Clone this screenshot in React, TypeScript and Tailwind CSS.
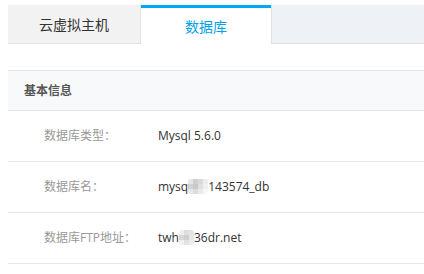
const rows = [
  { label: "数据库类型：", value: <>Mysql 5.6.0</> },
  {
    label: "数据库名：",
    value: (
      <>
        mysq
        <Mosaic cells={["#e6e6e6", "#cfcfcf", "#dadada", "#ececec", "#d2d2d2", "#c8c8c8", "#e0e0e0", "#f0f0f0", "#e8e8e8", "#dcdcdc", "#eaeaea", "#f6f6f6"]} />
        143574_db
      </>
    ),
  },
  {
    label: "数据库FTP地址：",
    value: (
      <>
        twh
        <Mosaic cells={["#eeeeee", "#dedede", "#e4e4e4", "#d8d8d8", "#cfcfcf", "#e6e6e6", "#f2f2f2", "#e2e2e2", "#ececec"]} cols="grid-cols-3" />
        36dr.net
      </>
    ),
  },
]

function Mosaic({ cells, cols = "grid-cols-4" }: { cells: string[]; cols?: string }) {
  return (
    <span className="inline-block align-middle -mt-[2px]">
      <span className={`grid ${cols} blur-[0.6px] rounded-[3px] overflow-hidden`}>
        {cells.map((c, i) => (
          <span key={i} className="block w-[5px] h-[5px]" style={{ background: c }} />
        ))}
      </span>
    </span>
  )
}

const App = () => {
  return (
    <div
      className="w-[424px] h-[274px] bg-white pl-2 pt-[5px] overflow-hidden"
      style={{ fontFamily: '"Open Sans", "Noto Sans CJK SC", sans-serif' }}
    >
      <div className="flex h-[39px]">
        <div className="w-[133px] flex items-center justify-center bg-[#f2f2f2] border-r border-b border-[#e3e3e3] text-[14px] text-[#333]">
          云虚拟主机
        </div>
        <div className="w-[130px] flex items-center justify-center bg-white border-t-[3px] border-[#00a9f2] text-[14px] text-[#00a2ea]">
          数据库
        </div>
        <div className="flex-1 bg-[#eef1f5] border-l border-b border-[#dde1e5]" />
      </div>

      <div className="mt-[26px]">
        <div className="h-[41px] flex items-center pl-4 bg-[#f8f9fa] border-y border-[#e3e6e9] text-[12px] font-bold text-[#555]">
          基本信息
        </div>
        {rows.map((r) => (
          <div key={r.label} className="h-[51px] flex items-center border-b border-[#e8e8e8] text-[12px]">
            <div className="w-[150px] pl-9 text-[#999]">{r.label}</div>
            <div className="text-[#333]">{r.value}</div>
          </div>
        ))}
      </div>
    </div>
  )
}
export default App
